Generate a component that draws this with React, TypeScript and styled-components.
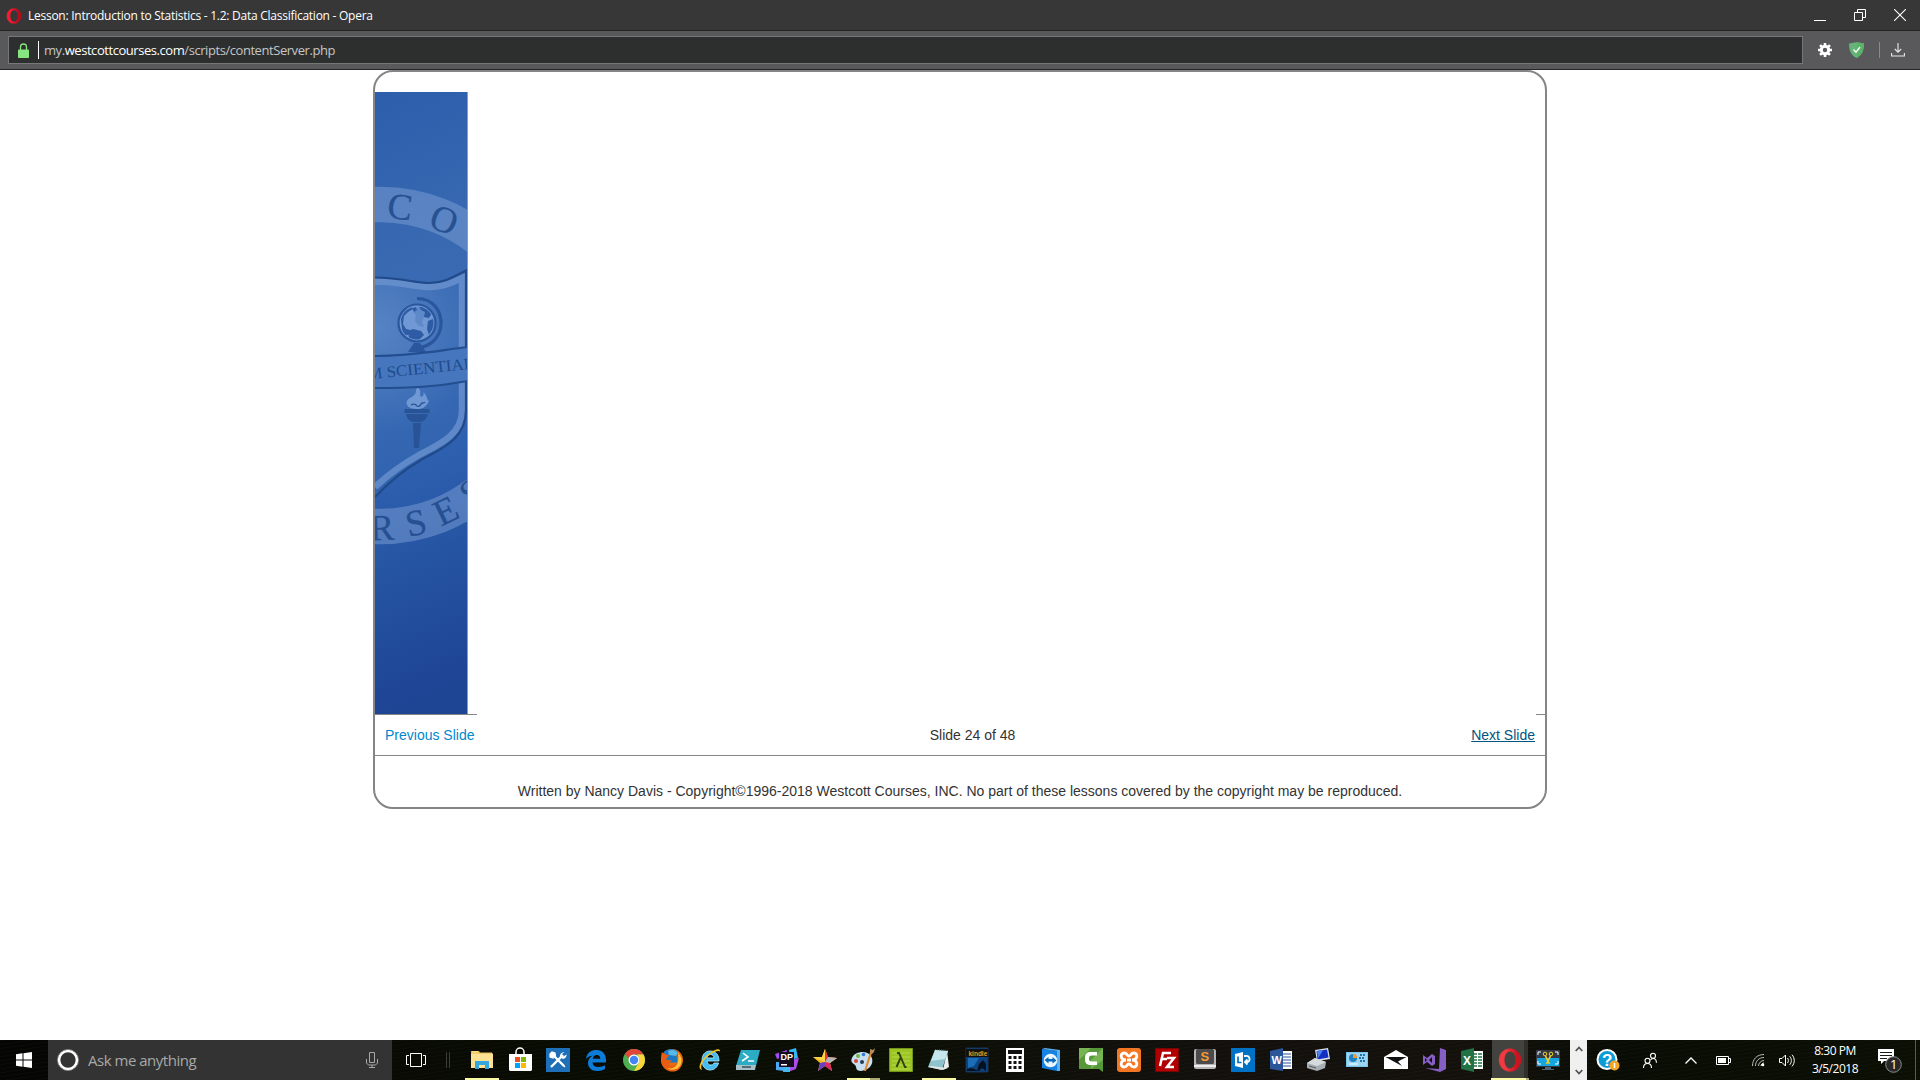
import React from "react";
import styled, { createGlobalStyle } from "styled-components";

const ui = `"Open Sans", "Noto Sans", sans-serif`;
const arial = `"Liberation Sans", Arial, sans-serif`;

const Global = createGlobalStyle`
  * { box-sizing: border-box; }
  html, body { margin: 0; padding: 0; background: #fff; overflow: hidden; }
`;

const Screen = styled.div`
  width: 1920px;
  height: 1080px;
  display: flex;
  flex-direction: column;
  background: #fff;
  overflow: hidden;
`;

/* ---------- browser chrome ---------- */
const TitleBar = styled.header`
  height: 31px;
  flex: none;
  display: flex;
  align-items: center;
  justify-content: space-between;
  background: #373737;
  border-bottom: 1px solid #222;
  padding: 0 14px 0 6px;
`;
const WindowTitle = styled.div`
  display: flex;
  align-items: center;
  gap: 6px;
  font: 12px/16px ${ui};
  letter-spacing: -0.26px;
  color: #fff;
  white-space: nowrap;
  padding-top: 1px;
`;
const WindowButtons = styled.div`
  display: flex;
  align-items: center;
  gap: 28px;
  svg { display: block; }
`;
const Toolbar = styled.div`
  height: 39px;
  flex: none;
  display: flex;
  align-items: center;
  background: #59595b;
  border-bottom: 1px solid #262626;
  padding: 0 15px 0 8px;
`;
const AddressField = styled.div`
  width: 1795px;
  height: 28px;
  display: flex;
  align-items: center;
  background: #2d2f2e;
  border: 1px solid #777779;
  padding-left: 9px;
`;
const Caret = styled.i`
  width: 1px;
  height: 18px;
  margin: 0 5px 0 9px;
  background: #fff;
`;
const Url = styled.span`
  font: 13px/18px ${ui};
  letter-spacing: -0.44px;
  color: #c6c6c6;
  white-space: nowrap;
  b { font-weight: 400; color: #fff; }
`;
const ToolbarIcons = styled.div`
  flex: 1;
  display: flex;
  align-items: center;
  justify-content: flex-end;
`;
const Rule = styled.i`
  width: 1px;
  height: 16px;
  margin: 0 11px 0 15px;
  background: #8b8b8b;
`;

/* ---------- lesson page ---------- */
const Page = styled.main`
  height: 970px;
  flex: none;
  display: flex;
  justify-content: center;
  align-items: flex-start;
`;
const Card = styled.section`
  width: 1174px;
  height: 739px;
  display: flex;
  flex-direction: column;
  border: 2px solid #858585;
  border-radius: 20px;
  padding-top: 20px;
  font: 14px/20px ${arial};
  color: #333;
  overflow: hidden;
`;
const SlideArea = styled.div`
  height: 622px;
  flex: none;
`;
const Edges = styled.div`
  display: flex;
  justify-content: space-between;
  height: 1px;
  flex: none;
`;
const Edge = styled.i<{ $w: number }>`
  width: ${(p) => p.$w}px;
  background: #858585;
`;
const NavRow = styled.nav`
  height: 41px;
  flex: none;
  display: grid;
  grid-template-columns: 102px 1fr 102px;
  align-items: center;
  padding: 0 10px;
  border-bottom: 1px solid #858585;
`;
const SlideLink = styled.a<{ $active?: boolean }>`
  color: ${(p) => (p.$active ? "#005580" : "#0088cc")};
  text-decoration: ${(p) => (p.$active ? "underline" : "none")};
  justify-self: ${(p) => (p.$active ? "end" : "start")};
  white-space: nowrap;
`;
const Counter = styled.span`
  justify-self: center;
  padding-left: 25px;
`;
const Copyright = styled.p`
  margin: 25px 0 0;
  text-align: center;
  white-space: nowrap;
`;

/* ---------- taskbar ---------- */
const Taskbar = styled.footer`
  height: 40px;
  flex: none;
  display: flex;
  align-items: stretch;
  background:
    repeating-linear-gradient(172deg, rgba(70, 80, 50, 0.07) 0 1px, transparent 1px 4px),
    linear-gradient(90deg, #050603 0, #080a03 400px, #0a0e04 850px, #12100c 1150px, #14110d 1480px, #090c04 1620px, #0b0f04 1920px);
`;
const Start = styled.div`
  width: 48px;
  flex: none;
  display: grid;
  place-items: center;
`;
const Search = styled.div`
  width: 344px;
  flex: none;
  display: flex;
  align-items: center;
  background: #333;
  padding: 0 14px 0 9px;
  font: 15px/20px ${ui};
  letter-spacing: -0.48px;
  color: #a8a8a8;
  span { flex: 1; padding-left: 9px; }
`;
const TaskView = styled.div`
  width: 71px;
  flex: none;
  display: flex;
  align-items: center;
  padding-left: 14px;
  gap: 20px;
`;
const Grip = styled.i`
  width: 4px;
  height: 16px;
  border: solid #3d3d36;
  border-width: 0 1px;
`;
const Apps = styled.div`
  width: 1107px;
  flex: none;
  display: flex;
`;
type Run = "" | "open" | "multi" | "active";
const AppSlot = styled.div<{ $run: Run }>`
  width: 38.07px;
  flex: none;
  display: flex;
  align-items: center;
  justify-content: center;
  background: ${(p) =>
    p.$run === "active"
      ? "linear-gradient(90deg, transparent 1px, #42423f 1px 33px, #2f2f2c 33px 37px, transparent 37px)"
      : "none"};
  border-bottom: 2px solid transparent;
  border-image: ${(p) =>
      p.$run === ""
        ? "none"
        : p.$run === "open"
        ? "linear-gradient(90deg, transparent 4px, #fbfba6 4px 34px, transparent 34px)"
        : p.$run === "multi"
        ? "linear-gradient(90deg, transparent 5px, #fbfba6 5px 25px, #a9aa75 25px 34px, transparent 34px)"
        : "linear-gradient(90deg, #fbfba6 33px, #a9aa75 33px 37px, transparent 37px)"}
    2;
  border-top: 0 solid;
  border-left: 0 solid;
  border-right: 0 solid;
  svg { display: block; margin-top: 2px; overflow: visible; }
`;
const Scroller = styled.div`
  width: 17px;
  flex: none;
  background: #f0f0f0;
  display: flex;
  flex-direction: column;
  align-items: center;
  justify-content: space-between;
  padding: 6px 0 5px;
`;
const Tray = styled.div`
  flex: 1;
  display: flex;
  align-items: center;
  padding-left: 9px;
  svg { display: block; flex: none; overflow: visible; }
`;
const TrayItem = styled.div<{ $w: number }>`
  width: ${(p) => p.$w}px;
  flex: none;
  display: grid;
  place-items: center;
`;
const Clock = styled.div`
  width: 62px;
  flex: none;
  text-align: center;
  font: 12px/18px ${ui};
  letter-spacing: -0.48px;
  color: #fff;
  white-space: nowrap;
  padding-bottom: 1px;
`;
const ShowDesktop = styled.i`
  margin-left: auto;
  width: 5px;
  height: 40px;
  border-left: 1px solid #5b5b55;
`;

const Serif = `"Liberation Serif", "Times New Roman", serif`;

const Crest = () => (
  <svg width="93" height="622" viewBox="0 0 93 622" style={{ display: "block" }}>
    <defs>
      <linearGradient id="base" x1="0" y1="0" x2="0.06" y2="1">
        <stop offset="0" stopColor="#2d5eac" />
        <stop offset="0.28" stopColor="#3869b1" />
        <stop offset="0.45" stopColor="#3a6cb6" />
        <stop offset="0.62" stopColor="#2e60b0" />
        <stop offset="0.78" stopColor="#2554a2" />
        <stop offset="1" stopColor="#1e4494" />
      </linearGradient>
      <radialGradient id="glow" gradientUnits="userSpaceOnUse" cx="0" cy="235" r="110">
        <stop offset="0" stopColor="#7da4da" stopOpacity="0.45" />
        <stop offset="1" stopColor="#7da4da" stopOpacity="0" />
      </radialGradient>
      <clipPath id="globeClip"><circle cx="42" cy="231" r="16.5" /></clipPath>
    </defs>
    <rect width="93" height="622" fill="url(#base)" />
    <circle cx="5" cy="273.5" r="161" fill="none" stroke="#7d9fd6" strokeOpacity="0.5" strokeWidth="35.5" />
    <g fill="#1d4889" fillOpacity="0.85" stroke="#1d4889" strokeOpacity="0.5" strokeWidth="0.5" fontFamily={Serif} fontSize="37" textAnchor="middle">
      <text transform="translate(25 115) rotate(7)" y="12">C</text>
      <text transform="translate(69 128) rotate(21)" y="12">O</text>
      <text transform="translate(7 436) rotate(-2)" y="12">R</text>
      <text transform="translate(41 431) rotate(-12)" y="12">S</text>
      <text transform="translate(71 419) rotate(-26)" y="12">E</text>
      <text transform="translate(97 400) rotate(-36)" y="12">S</text>
    </g>
    <path d="M0 186C28 186 40 191 54 191C70 191 80 184 91 179V318C91 350 60 360 45 370C26 381 14 391 0 405Z" fill="#3568b0" fillOpacity="0.6" />
    <path d="M0 186C28 186 40 191 54 191C70 191 80 184 91 179V318C91 350 60 360 45 370C26 381 14 391 0 405Z" fill="url(#glow)" />
    <path d="M0 189.500C24 189.500 40 195 56 195C71 195 81 189 87 186V319C87 345 58 355 44 363C26 373 14 382 0 395" fill="none" stroke="#6d94d0" strokeOpacity="0.75" strokeWidth="6.500" />
    <path d="M0 185.500C28 186 40 191 54 191C70 191 80 184 91 178.500V318C91 349 63 358 46 368C27 379 14 390 0 405" fill="none" stroke="#214a8a" strokeWidth="2.200" />
    <circle cx="42" cy="231" r="18.500" fill="#6f98d4" stroke="#2a569d" strokeWidth="2.200" />
    <path d="M42 206.500C58 206.500 67 219 66 233C65 246 55 255 42 256" fill="none" stroke="#2a569d" strokeWidth="3.200" />
    <g clipPath="url(#globeClip)" fill="#2d5ba4">
      <path d="M24 214h12l2 3-5 3-4 4-1 8 3 5 4 1 1 4-8 2z" />
      <path d="M42 215l5-1 4 3 2 5-4 3-2 5 2 5-5-1-4-5 1-6-3-3 3-1z" opacity="0.25" />
      <path d="M44 214h10l6 8-3-1-3 5-5-1 1-5-4-2z" />
      <path d="M53 229l5-2 3 3-2 9-5 4-2-6z" />
      <path d="M33 239l5-2 8 2 3 4-6 6-9-3z" />
      <path d="M37 216l4-1 1 3-3 2z" />
    </g>
    <path d="M39 251h6l6 9H33z" fill="#2a569d" />
    <path d="M0 264C35 264 60 259 93 255V289C60 295 35 296 0 296Z" fill="#4676be" />
    <path d="M0 264C35 264 60 259 93 255M0 296C35 296 60 295 93 289" fill="none" stroke="#234e90" strokeWidth="2.200" />
    <text transform="translate(-7 287.500) rotate(-6)" fontFamily={Serif} fontSize="16" textLength="107" lengthAdjust="spacingAndGlyphs" fill="#1f4b8a">M SCIENTIAE</text>
    <path d="M32 313C30 307 36 306 38 304C43 301 39 297 43 296C47 298 44 303 46 305C49 304 49 302 48 300C53 304 51 307 54 309C51 316 46 317 43 317C37 317 34 316 32 313Z" fill="#7099d4" />
    <path d="M36 313c2-1 4-1 5 0c1 2 4 2 5-1c1-2 3 0 4-2" fill="none" stroke="#2a569d" strokeWidth="1.400" />
    <path d="M29.500 317h25v4h-25zM31 322h22c-1 5-5 8-8 8h-6c-4 0-7-3-8-8zM38 331h8l-2 25h-5z" fill="#285497" />
    <rect x="92" width="1" height="622" fill="#7e9dd0" />
  </svg>
);

const OperaO = ({ size, dark }: { size: number; dark?: boolean }) => (
  <svg width={size} height={size} viewBox="0 0 24 24">
    <defs>
      <linearGradient id={dark ? "opd" : "opl"}>
        <stop offset="0.3" stopColor={dark ? "#f71a30" : "#f23840"} />
        <stop offset="0.8" stopColor={dark ? "#b00e1c" : "#c8141f"} />
      </linearGradient>
    </defs>
    <path fillRule="evenodd" fill={`url(#${dark ? "opd" : "opl"})`} d="M12 .5a11.200 11.500 0 1 0 0 23a11.200 11.500 0 1 0 0-23zM12 3.500c3.300 0 5.500 3.800 5.500 8.500s-2.200 8.500-5.500 8.500S6.500 16.700 6.500 12 8.700 3.500 12 3.500z" />
  </svg>
);

const Icon = ({ children }: { children: React.ReactNode }) => (
  <svg width="24" height="24" viewBox="0 0 24 24">{children}</svg>
);
const sans = { fontFamily: arial, fontWeight: 700 };

const apps: { name: string; run?: Run; art: React.ReactNode }[] = [
  { name: "explorer", run: "open", art: <Icon><path d="M1 3h8l1 1.500h12V20H1z" fill="#e8b84a" /><path d="M1 5.500h22V20H1z" fill="#fde293" /><path d="M2 3.500h6v1H2z" fill="#fff3b8" /><path d="M5 21v-8h14v8h-4v-4H9v4z" fill="#35a7e0" /></Icon> },
  { name: "store", art: <Icon><path d="M8 7V4a4 4 0 0 1 8 0v3" fill="none" stroke="#fff" strokeWidth="1.500" /><path d="M1 6h23v16l-1 1H2l-1-1z" fill="#fff" /><path d="M7 9h5v5H7z" fill="#f25022" /><path d="M13 9h5v5h-5z" fill="#7fba00" /><path d="M7 15h5v5H7z" fill="#00a4ef" /><path d="M13 15h5v5h-5z" fill="#ffb900" /></Icon> },
  { name: "tools", art: <Icon><path d="M0 0h24v24H0z" fill="#1d70b8" /><path d="M5 19L17 7M7 7l11 11" stroke="#fff" strokeWidth="2.400" /><path d="M4 6l2-2 3 1 .5 3-2.500 2-3-1zM15 15l4 4" fill="#fff" stroke="#fff" strokeWidth="1.200" /><path d="M18.500 4l-3 2.500 2 2 3-2c.5 3-3 5.500-5.500 3.500S15 4 18.500 4z" fill="#fff" /></Icon> },
  { name: "edge", art: <Icon><path d="M2 11C3 4.500 7 2 12.500 2C19 2 22 6.500 22 12v2.500H8.500c.2 3 2.500 4.500 6 4.500 2.500 0 4.500-.6 6.500-1.700V21c-2 1.200-4.600 2-7.600 2C7.500 23 4 19.500 4 15c0-3.600 2-6 5-7.500C5.500 8 3.500 9 2 11zM8.700 10.800h7.600c0-2.400-1.200-3.800-3.500-3.800-2.200 0-3.700 1.500-4.100 3.800z" fill="#0c7cd8" /></Icon> },
  { name: "chrome", art: <Icon><circle cx="12" cy="12" r="11" fill="#4caf50" /><path d="M12 1a11 11 0 0 1 9.500 5.500H12a5.500 5.500 0 0 0-5 4L2.700 6.200A11 11 0 0 1 12 1z" fill="#e2453a" /><path d="M21.500 6.500A11 11 0 0 1 12 23l4.800-8.300c1.300-2.400.8-5.900-1.800-8.200z" fill="#fdd53a" /><circle cx="12" cy="12" r="5.500" fill="#fff" /><circle cx="12" cy="12" r="4.200" fill="#4285f4" /></Icon> },
  { name: "firefox", art: <Icon><circle cx="12" cy="12" r="11" fill="#e66a14" /><path d="M4 3.500a11 11 0 0 1 14 0l-1 11H6z" fill="#1a79c5" /><path d="M8 3c4-2 8-1 10 2l-2 3-7-1z" fill="#57b7e8" /><path d="M2 4c2 2 3 3 7 3 0 2-3 3-3 4 1 2 4 0 6 2-3 1-5 4-1 5 6 1 8-5 5-11 7 3 8 11 2 15S3 22 1.500 15C1 10 1 7 2 4z" fill="#e95d10" /><path d="M18 5c5 5 4 11 1 14s-8 4-12 1c7 2 13-2 11-15z" fill="#ffc53a" /></Icon> },
  { name: "ie", art: <Icon><path d="M12 3c6 0 9 4 9 10H9c.4 3 2 4 4 4 1.500 0 2.500-.7 3-2h4.500c-1 4-4 7-8.500 7-5 0-8-4-8-9.500S7 3 12 3zM9 10h7c-.2-2.200-1.400-3.500-3.500-3.500S9.300 7.800 9 10z" fill="#43bdf0" stroke="#b9ecff" strokeWidth=".8" /><path d="M4 22c-5-1-2-9 5-15s14-8 13-3c0-2-6-1-12 4s-8 11-6 14z" fill="#f7c41f" /></Icon> },
  { name: "powershell", art: <Icon><path d="M5 2h19l-4 16H0z" fill="#2cabc4" /><path d="M0 17h20l-1 5H0z" fill="#a9bfc8" /><path d="M6 19h9" stroke="#37515a" strokeWidth="1.500" /><path d="M7 5l5 4-6 4M12 13h6" fill="none" stroke="#fff" strokeWidth="1.600" /></Icon> },
  { name: "dotpeek", art: <Icon><path d="M0 6l12-4-1 7-9 2z" fill="#a34bf0" /><path d="M14 2l7-2 2 10-7 2z" fill="#34b5f4" /><path d="M1 14l8 0v9l-8-1z" fill="#4aa8f7" /><path d="M14 12l10-2-3 11-8 3z" fill="#a94de8" /><path d="M9 18h6v6H8z" fill="#45b9f0" /><path d="M4 4h15v15H4z" fill="#160d1c" /><text x="5.500" y="12" fontSize="9" fill="#fff" {...sans}>DP</text><path d="M6 16h6v1.500H6z" fill="#fff" /></Icon> },
  { name: "star", art: <Icon><path d="M12 1l3 8 9 1-7 5 2 8-7-5-7 5 2-8-7-6h9z" fill="#f6b425" /><path d="M12 1l3 8 9 1-12 4z" fill="#e5343d" /><path d="M15 9l9 1-7 5-5-1z" fill="#b5b5bd" /><path d="M12 14l5 1 2 8-7-5z" fill="#df2763" /><path d="M12 14v4l-7 5 2-8z" fill="#6e3ec0" /><path d="M12 14L0 9h9l3-8z" fill="#fbd545" /></Icon> },
  { name: "paint", run: "multi", art: <Icon><path d="M1 10c3-7 15-8 19-2 4 7-1 14-10 15-6 0-4-4-6-6s-5-3-3-7z" fill="#c7dff0" /><circle cx="7" cy="8" r="2" fill="#70b43c" /><circle cx="12.500" cy="6.500" r="1.800" fill="#387cc9" /><circle cx="5" cy="13" r="2" fill="#cf4b38" /><circle cx="11" cy="14" r="2" fill="#243c57" /><path d="M19 4l2 1-6 18-2 0z" fill="#e18a2d" /><path d="M19 4l0-3 3 1 2-2-1 4-2 2z" fill="#b88b5b" /></Icon> },
  { name: "lambda", art: <Icon><path d="M.5.500h23v23H.5z" fill="#9ac522" stroke="#74951b" /><path d="M3 5h18M3 9h18M3 13h18M3 17h18M3 21h18" stroke="#b4d94f" /><path d="M8 5h2l6 14h1.500M11.500 10L7.500 19" fill="none" stroke="#33420c" strokeWidth="1.900" /></Icon> },
  { name: "notepad", run: "open", art: <Icon><path d="M20 3l2 16-6 3z" fill="#e9edf0" /><path d="M8 2l13 1-6 19L1 19z" fill="#8ec3cd" /><path d="M8 2l13 1-3 8L4 13z" fill="#c4e6ec" /><path d="M1 19l14 3 6-2-17-2z" fill="#dfe5e6" /><path d="M8 1.500l13 1" stroke="#555" strokeDasharray="1 1" /></Icon> },
  { name: "kindle", art: <Icon><path d="M1 0h22v24H1z" fill="#0c427d" stroke="#173457" /><path d="M1 1h22v8H1z" fill="#130f0a" /><text x="3.500" y="8" fontSize="6.500" fill="#f19a25" {...sans}>kindle</text><path d="M12 23l2-7 4-4 3 4v7l-4-3-3 3zM2 21c5-2 8 1 12 2H2z" fill="#06111f" /><path d="M3 10h11l-5 8-6 2z" fill="#1c6db7" /></Icon> },
  { name: "calculator", art: <Icon><path d="M3 0h18v24H3z" fill="#fff" /><path d="M5 2h14v4H5z" fill="#111" /><path d="M5.500 9.500h14M5.500 14.500h14M5.500 19.500h14" stroke="#111" strokeWidth="3" strokeDasharray="3 2" /></Icon> },
  { name: "teamviewer", art: <Icon><path d="M1 1l15 2v20L1 20z" fill="#1682e3" /><path d="M1 1l3-1 15 2v21l-3 0V3z" fill="#58b2f5" /><circle cx="9.500" cy="12.500" r="6.800" fill="#eaf6fd" /><path d="M3.500 12l4-3v2h4V9l4 3.500-4 3v-2h-4v2z" fill="#0868bd" /></Icon> },
  { name: "camtasia", art: <Icon><path d="M0 0h24v24l-4-3H0z" fill="#57993a" /><path d="M0 0h12L0 12zM12 12l12-12v12L12 21z" fill="#76b551" /><path d="M18 4h-6c-4 0-6 2-6 5v3c0 3 2 5 6 5h6v-3.500h-5c-2 0-3-.8-3-2.500v-1c0-1.700 1-2.500 3-2.500h5z" fill="#fff" /></Icon> },
  { name: "xampp", art: <Icon><rect width="24" height="24" rx="3" fill="#f37623" /><path d="M9 12C3 12 3 5 7 5s2 3 5 3 1-3 5-3 4 7-2 7c6 0 6 7 2 7s-2-3-5-3-1 3-5 3-4-7 2-7zM10 12h4" fill="none" stroke="#fff" strokeWidth="2.900" /></Icon> },
  { name: "filezilla", art: <Icon><path d="M.5.500h23v23H.5z" fill="#b20000" stroke="#850000" strokeDasharray="2 1" /><path d="M5 18L8 5h8M7 11h5M12 10h7l-7 9h7" fill="none" stroke="#fff" strokeWidth="2.500" /></Icon> },
  { name: "sublime", art: <Icon><rect x="1" y="1" width="22" height="20" rx="2" fill="#b6b6b6" /><rect x="3" y="1" width="18" height="15" rx="1.500" fill="#4b4b4b" /><path d="M1 17h22v2H1z" fill="#eee" /><text x="7.500" y="13" fontSize="13" fill="#f99b2f" {...sans}>S</text></Icon> },
  { name: "lync", art: <Icon><path d="M0 0h24v24H0z" fill="#0072c6" /><path d="M4 6l8-2v16l-8-2z" fill="#fff" /><path d="M7 8.500v6h3.500" fill="none" stroke="#0072c6" strokeWidth="1.700" /><path d="M13 8h2c4-1 5 6 1 6h-2M16.500 11.500L14 14l2.500 2.500" fill="none" stroke="#fff" strokeWidth="1.800" /></Icon> },
  { name: "word", art: <Icon><path d="M12 3h11v18H12z" fill="#fff" /><path d="M14 6h8M14 9h8M14 12h8M14 15h8M14 18h8" stroke="#2b579a" /><path d="M1 3l13-3v23L1 21z" fill="#2b579a" /><text x="2.500" y="16" fontSize="11" fill="#fff" {...sans}>W</text></Icon> },
  { name: "remote-pc", art: <Icon><path d="M8 2l13-2 2 11-13 2z" fill="#dbe2e8" /><path d="M9.500 3l10.500-1.500 1.500 8-11 2z" fill="#142fc4" /><path d="M10 3l6-.8-5 8z" fill="#4e81f0" /><path d="M0 15l8-5 11 4-1 6-8 3-10-3z" fill="#a7aeb3" /><path d="M0 15l8-5 11 4-9 4z" fill="#d5dadd" /><path d="M2 18l7 2" stroke="#555" /></Icon> },
  { name: "control-panel", art: <Icon><path d="M1 4h22v15H1z" fill="#78c5ec" /><path d="M2 5h20v13H2z" fill="#9bd5f2" /><circle cx="8" cy="10" r="4" fill="#2180c0" /><path d="M8 6a4 4 0 0 1 4 4H8z" fill="#f49b28" /><path d="M15 7h5M14 10h6M15 13h5" stroke="#2372ad" strokeWidth="2" strokeDasharray="2 1" /><path d="M4 16h9" stroke="#fff" /></Icon> },
  { name: "mail", art: <Icon><path d="M0 9l12-7 12 7v12H0z" fill="#fff" /><path d="M1.500 9h21l-8.500 4.500 4 4.500z" fill="#111" /></Icon> },
  { name: "visual-studio", art: <Icon><path d="M18 0l6 2v19l-6 3-15-4 14 1z" fill="#865fc5" /><path d="M1 7l4 3 5-4 3 2v8l-3 2-5-4-4 3zM3 10v4l2-2zM7 12l3 3V9z" fillRule="evenodd" fill="#865fc5" /></Icon> },
  { name: "excel", art: <Icon><path d="M12 3h11v18H12z" fill="#fff" /><path d="M14 6h8M14 9h8M14 12h8M14 15h8M14 18h8" stroke="#217346" strokeWidth="1.500" /><path d="M17.500 4v16" stroke="#fff" /><path d="M1 3l13-3v24L1 21z" fill="#217346" /><text x="3" y="17" fontSize="12" fill="#fff" {...sans}>X</text></Icon> },
  { name: "opera", run: "active", art: <OperaO size={24} /> },
  { name: "snip", art: <Icon><path d="M0 2h24v17H0z" fill="#333a46" /><path d="M1 10h22v8H1z" fill="#16a5e3" /><path d="M2 7V4h3M19 4h3v3M2 13v3h3M19 16h3v-3" fill="none" stroke="#fff" /><path d="M9.500 8l4 8M14.500 8l-4 8" stroke="#f3cf22" strokeWidth="1.600" /><circle cx="9" cy="6" r="1.800" fill="none" stroke="#f3cf22" /><circle cx="15" cy="6" r="1.800" fill="none" stroke="#f3cf22" /><path d="M9 19h6v2h3v1H6v-1h3z" fill="#4c6276" /></Icon> },
];

export default function App() {
  return (
    <Screen>
      <Global />
      <TitleBar>
        <WindowTitle>
          <OperaO size={16} dark />
          Lesson: Introduction to Statistics - 1.2: Data Classification - Opera
        </WindowTitle>
        <WindowButtons>
          <svg width="12" height="12"><path d="M0 11.500h12" stroke="#fff" /></svg>
          <svg width="12" height="12"><path d="M.5 3.500h8v8h-8zM3.500 3V.500h8v8H9" fill="none" stroke="#fff" /></svg>
          <svg width="12" height="12"><path d="M0 0l12 12M12 0L0 12" stroke="#fff" strokeWidth="1.100" /></svg>
        </WindowButtons>
      </TitleBar>
      <Toolbar>
        <AddressField>
          <svg width="11" height="15" viewBox="0 0 11 15"><path d="M2.500 7V4a3 3 0 0 1 6 0v3" fill="none" stroke="#86e57f" strokeWidth="1.300" /><rect y="6.500" width="11" height="8.500" rx=".8" fill="#86e57f" /></svg>
          <Caret />
          <Url>my.<b>westcottcourses.com</b>/scripts/contentServer.php</Url>
        </AddressField>
        <ToolbarIcons>
          <svg width="14" height="14" viewBox="-7 -7 14 14" style={{ marginRight: 17 }}>
            <circle r="3.700" fill="none" stroke="#fff" strokeWidth="3" />
            {[0, 45, 90, 135].map((a) => (
              <path key={a} d="M0-7V-4M0 4V7" stroke="#fff" strokeWidth="2.600" transform={`rotate(${a})`} />
            ))}
          </svg>
          <svg width="15" height="16" viewBox="0 0 15 16"><path d="M0 1.500C3 1.500 5 .3 7.500.3S12 1.500 15 1.500C15 9 12.500 13.500 7.500 16C2.500 13.500 0 9 0 1.500z" fill="#67b279" /><path d="M7.500.3C10 .3 12 1.500 15 1.500c0 7.500-2.500 12-7.500 14.500z" fill="#5bb36a" /><path d="M4.500 7.500l2.500 2.700L11 5" fill="none" stroke="#fff" strokeWidth="1.300" /></svg>
          <Rule />
          <svg width="14" height="14" viewBox="0 0 14 14"><path d="M7 0v9M3.800 6L7 9.200 10.200 6M.6 10v3h12.800v-3" fill="none" stroke="#e8e8e8" strokeWidth="1.100" /></svg>
        </ToolbarIcons>
      </Toolbar>

      <Page>
        <Card>
          <SlideArea><Crest /></SlideArea>
          <Edges><Edge $w={102} /><Edge $w={9} /></Edges>
          <NavRow>
            <SlideLink>Previous Slide</SlideLink>
            <Counter>Slide 24 of 48</Counter>
            <SlideLink $active>Next Slide</SlideLink>
          </NavRow>
          <Copyright>
            Written by Nancy Davis - Copyright©1996-2018 Westcott Courses, INC. No part of these lessons covered by the copyright may be reproduced.
          </Copyright>
        </Card>
      </Page>

      <Taskbar>
        <Start>
          <svg width="16" height="16" viewBox="0 0 16 16"><path d="M0 2.200L6.500 1.300V7.500H0zM7.500 1.200L16 0v7.500H7.500zM0 8.500h6.500v6.200L0 13.800zM7.500 8.500H16V16l-8.500-1.200z" fill="#fff" /></svg>
        </Start>
        <Search>
          <svg width="22" height="22"><circle cx="11" cy="11" r="9" fill="none" stroke="#fff" strokeWidth="2.700" /><circle cx="11" cy="11" r="10.600" fill="none" stroke="#999" strokeWidth=".7" /></svg>
          <span>Ask me anything</span>
          <svg width="12" height="16"><path d="M3.500.500h5v10h-5zM.5 7v4l2 2h7l2-2V7M6 13v2.500M3 15.500h6" fill="none" stroke="#a8a8a8" /></svg>
        </Search>
        <TaskView>
          <svg width="20" height="14"><path d="M4.500.500h11v13h-11zM3 2.500H.5v9H3M17 2.500h2.500v9H17" fill="none" stroke="#fff" /></svg>
          <Grip />
        </TaskView>
        <Apps>
          {apps.map((a) => (
            <AppSlot key={a.name} $run={a.run ?? ""}>{a.art}</AppSlot>
          ))}
        </Apps>
        <Scroller>
          <svg width="8" height="6"><path d="M.7 5L4 1.500 7.300 5" fill="none" stroke="#505050" strokeWidth="1.700" /></svg>
          <svg width="8" height="6"><path d="M.7 1L4 4.500 7.300 1" fill="none" stroke="#505050" strokeWidth="1.700" /></svg>
        </Scroller>
        <Tray>
          <TrayItem $w={24}>
            <svg width="24" height="22"><circle cx="11" cy="10.500" r="9.500" fill="#0c9bd7" stroke="#fff" strokeWidth="2" /><text x="6" y="16.500" fontSize="17" fill="#fff" {...sans}>?</text><circle cx="18.500" cy="16.500" r="5" fill="#f5a623" /><path d="M18.500 14v5" stroke="#fff" strokeWidth="1.500" /></svg>
          </TrayItem>
          <TrayItem $w={60}>
            <svg width="14" height="15"><g fill="none" stroke="#fff" strokeWidth="1.100"><circle cx="4.500" cy="7.800" r="2.500" /><circle cx="10" cy="2.800" r="2.500" /><path d="M.5 15c0-6 8-6 8 0M7.500 6.800c3-2.500 6-1 6 3" /></g></svg>
          </TrayItem>
          <TrayItem $w={22}><svg width="12" height="7"><path d="M.5 6.500L6 1l5.500 5.500" fill="none" stroke="#fff" strokeWidth="1.300" /></svg></TrayItem>
          <TrayItem $w={43}><svg width="15" height="9"><path d="M.5.500h12v8H.5zM13 2.500h1.500v4H13" fill="none" stroke="#fff" /><path d="M2 2h8v5H2z" fill="#fff" /></svg></TrayItem>
          <TrayItem $w={25}><svg width="12" height="12"><g fill="none" stroke="#bbb"><path d="M.5 12C.5 5 5 .5 12 .5M3.500 12c0-5 3.500-8.500 8.500-8.500M6.500 12c0-3 2.500-5.500 5.500-5.500" /><path d="M9 12c0-1.500 1.500-3 3-3" stroke="#fff" /></g><circle cx="11" cy="11" r="1.300" fill="#fff" /></svg></TrayItem>
          <TrayItem $w={34}><svg width="16" height="13"><path d="M.5 4.500H3L6.500 1v11L3 8.500H.5zM8.500 4c1.200 1.500 1.200 3.500 0 5M10.700 2.300c2.200 2.500 2.200 6 0 8.500M13 .7c3 3.400 3 8.300 0 11.700" fill="none" stroke="#fff" /></svg></TrayItem>
          <Clock>8:30 PM<br />3/5/2018</Clock>
          <TrayItem $w={48}>
            <svg width="24" height="24"><path d="M0 1h16v12H6l-3 3v-3H0z" fill="#fff" /><path d="M2 4.500h12M2 7.500h12M2 10.500h7" stroke="#1a1a1a" /><circle cx="15.500" cy="16.500" r="7.800" fill="#272727" stroke="#8d8d8d" /><text x="12" y="21" fontSize="13" fontFamily={ui} fill="#fff">1</text></svg>
          </TrayItem>
          <ShowDesktop />
        </Tray>
      </Taskbar>
    </Screen>
  );
}
